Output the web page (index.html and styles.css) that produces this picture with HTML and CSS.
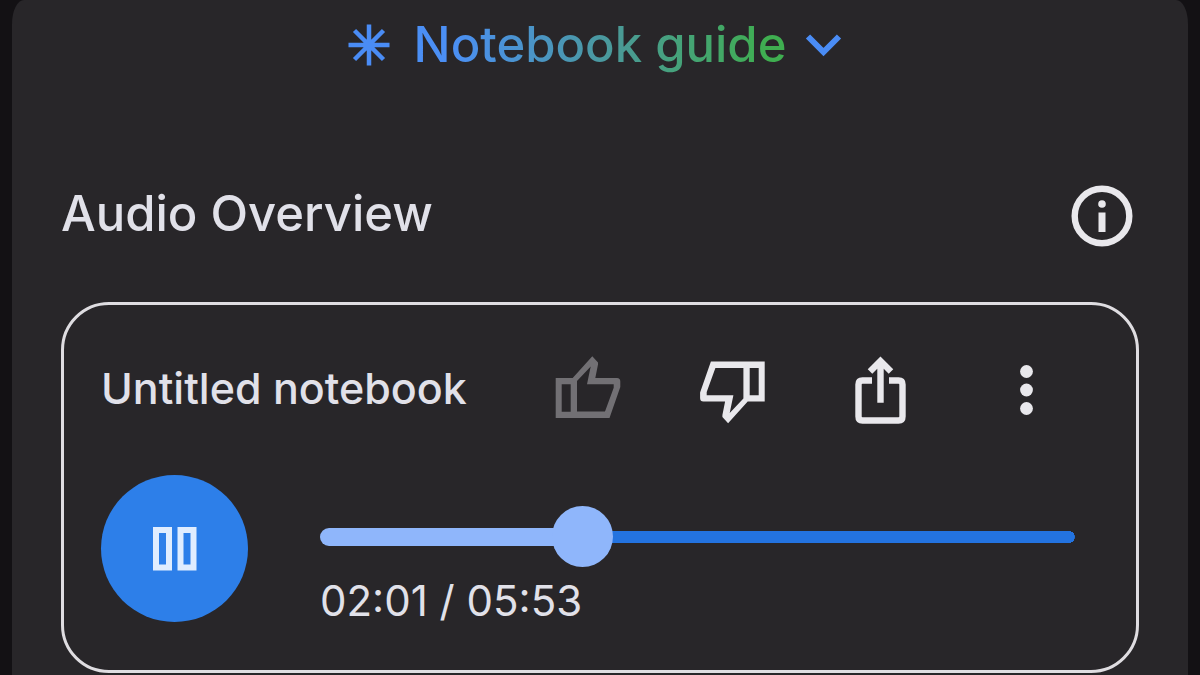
FILE: index.html
```
<!DOCTYPE html>
<html lang="en">
<head>
    <title>Notebook guide</title>
    <meta charset="UTF-8">
    <meta name="viewport" content="width=device-width, initial-scale=1">
    <link rel="stylesheet" href="styles.css">
</head>
<body>
<main class="panel">
    <header class="panel-header">
        <button class="guide-toggle" type="button" aria-expanded="true">
            <svg class="guide-star" viewBox="0 0 42 42" aria-hidden="true">
                <path d="M21 0.5V41.5M0.5 21H41.5M6.5 6.5L35.5 35.5M35.5 6.5L6.5 35.5"/>
            </svg>
            <span class="guide-title">Notebook guide</span>
            <svg class="guide-chevron" viewBox="0 0 56 56" aria-hidden="true">
                <path d="M12 19.5L27.5 35L43 19.5"/>
            </svg>
        </button>
    </header>

    <div class="section-row">
        <h2 class="section-title">Audio Overview</h2>
        <button class="icon-button info-button" type="button" aria-label="About Audio Overview">
            <svg viewBox="0 0 62 62" aria-hidden="true">
                <circle class="line" cx="31" cy="31" r="27.3"/>
                <circle cx="31" cy="19" r="3.8"/>
                <rect x="27.5" y="27.5" width="7" height="19.5"/>
            </svg>
        </button>
    </div>

    <section class="card">
        <div class="card-top">
            <h3 class="card-title">Untitled notebook</h3>
            <div class="actions">
                <button class="icon-button action muted" type="button" aria-label="Good" disabled>
                    <svg viewBox="0 0 72 72" aria-hidden="true">
                        <path fill-rule="evenodd" d="M3.7 24H20.7L40.3 2.3L46 8.5V10.5L43.3 24H65Q68.3 24 68.3 27.5V33L57.5 64H3.7ZM9.7 30.3V57.7H18.7V30.3ZM25 27V57.5H53L61.7 33.7V30.3H35L38.7 12.5Z"/>
                    </svg>
                </button>
                <button class="icon-button action" type="button" aria-label="Bad">
                    <svg viewBox="0 0 72 72" aria-hidden="true">
                        <path transform="rotate(180 35.2 35.8)" fill-rule="evenodd" d="M3.7 24H20.7L40.3 2.3L46 8.5V10.5L43.3 24H65Q68.3 24 68.3 27.5V33L57.5 64H3.7ZM9.7 30.3V57.7H18.7V30.3ZM25 27V57.5H53L61.7 33.7V30.3H35L38.7 12.5Z"/>
                    </svg>
                </button>
                <button class="icon-button action" type="button" aria-label="Share">
                    <svg viewBox="0 0 72 72" aria-hidden="true">
                        <path class="line" d="M28 26.5H18.5Q14.5 26.5 14.5 30.5V62.5Q14.5 66.5 18.5 66.5H54.5Q58.5 66.5 58.5 62.5V30.5Q58.5 26.5 54.5 26.5H45M36.5 48.7V8M26 17.5L36.5 7L47 17.5"/>
                    </svg>
                </button>
                <button class="icon-button action" type="button" aria-label="More options">
                    <svg viewBox="0 0 72 72" aria-hidden="true">
                        <circle cx="36.5" cy="17.5" r="6.4"/>
                        <circle cx="36.5" cy="36" r="6.4"/>
                        <circle cx="36.5" cy="54.5" r="6.4"/>
                    </svg>
                </button>
            </div>
        </div>

        <div class="player">
            <button class="pause-button" type="button" aria-label="Pause">
                <svg viewBox="0 0 46 46" aria-hidden="true">
                    <path d="M4 4H17V41.5H4ZM28.5 4H41.5V41.5H28.5Z"/>
                </svg>
            </button>
            <div class="timeline">
                <input class="seek" type="range" min="0" max="353" value="118" aria-label="Playback position" style="--played: 34%">
                <div class="time">02:01 / 05:53</div>
            </div>
        </div>
    </section>
</main>
</body>
</html>
```
FILE: styles.css
```
* {
    box-sizing: border-box;
}

body {
    margin: 0;
    padding: 0 12px;
    background: #131114;
    color: #e1e1e9;
    font-family: Inter, Roboto, sans-serif;
}

button {
    padding: 0;
    border: none;
    background: none;
    color: inherit;
    font: inherit;
    cursor: pointer;
}

svg {
    display: block;
}

h2, h3 {
    margin: 0;
    padding-bottom: 4px;
    font-weight: 500;
}

.panel {
    min-height: 100vh;
    padding: 0 49px;
    background: #282629;
    border-radius: 12px 12px 0 0 / 24px 24px 0 0;
}

.panel-header {
    display: flex;
    justify-content: center;
    height: 90px;
}

.guide-toggle {
    display: flex;
    align-items: center;
}

.guide-star {
    width: 42px;
    height: 42px;
    fill: none;
    stroke: #4a8cf5;
    stroke-width: 4.5;
}

.guide-title {
    margin: 0 10px 0 24px;
    font-size: 49px;
    font-weight: 500;
    line-height: 60px;
    background: linear-gradient(90deg, #4b8ff5 10%, #4a9a96 55%, #3fae50 95%);
    -webkit-background-clip: text;
    background-clip: text;
    color: transparent;
}

.guide-chevron {
    width: 56px;
    height: 56px;
    fill: none;
    stroke: #4a8cf5;
    stroke-width: 6;
}

.section-row {
    display: flex;
    justify-content: space-between;
    align-items: center;
    margin: 94px 0 54px;
    padding-right: 6px;
}

.section-title {
    font-size: 49px;
    line-height: 60px;
}

.icon-button {
    fill: #e9e8ec;
}

.line {
    fill: none;
    stroke: #e9e8ec;
    stroke-width: 6.4;
}

.info-button svg {
    width: 62px;
    height: 62px;
}

.card {
    padding: 49px 61px 48px 37px;
    border: 3px solid #dfdde1;
    border-radius: 48px;
}

.card-top {
    display: flex;
    justify-content: space-between;
    align-items: center;
}

.card-title {
    font-size: 43px;
    line-height: 60px;
    white-space: nowrap;
}

.actions {
    display: flex;
    gap: 48px;
}

.action {
    display: flex;
    justify-content: center;
    width: 98px;
}

.action svg {
    width: 72px;
    height: 72px;
}

.muted {
    fill: #727074;
}

.player {
    display: flex;
    gap: 72px;
    margin-top: 49px;
}

.pause-button {
    display: flex;
    flex: none;
    align-items: center;
    justify-content: center;
    width: 147px;
    height: 147px;
    border-radius: 50%;
    background: #2d7fe9;
}

.pause-button svg {
    width: 46px;
    height: 46px;
    fill: none;
    stroke: #e0edff;
    stroke-width: 6;
}

.timeline {
    flex: 1;
    padding-top: 31px;
}

.seek {
    -webkit-appearance: none;
    appearance: none;
    display: block;
    width: 100%;
    height: 61px;
    margin: 0 0 14px;
    background: none;
    cursor: pointer;
}

/* played part is thicker than the rest, which ends in its own round cap */
.seek::-webkit-slider-runnable-track {
    height: 18px;
    border-radius: 9px;
    background:
        linear-gradient(#8fb6fb, #8fb6fb) left center / var(--played) 18px no-repeat,
        radial-gradient(circle, #2373e0 6px, transparent 6px) right center / 12px 12px no-repeat,
        linear-gradient(#2373e0, #2373e0) left center / calc(100% - 6px) 12px no-repeat;
}

.seek::-webkit-slider-thumb {
    -webkit-appearance: none;
    width: 61px;
    height: 61px;
    margin-top: -22px;
    border-radius: 50%;
    background: #8fb6fb;
}

.time {
    font-size: 42px;
    line-height: 40px;
}
```
